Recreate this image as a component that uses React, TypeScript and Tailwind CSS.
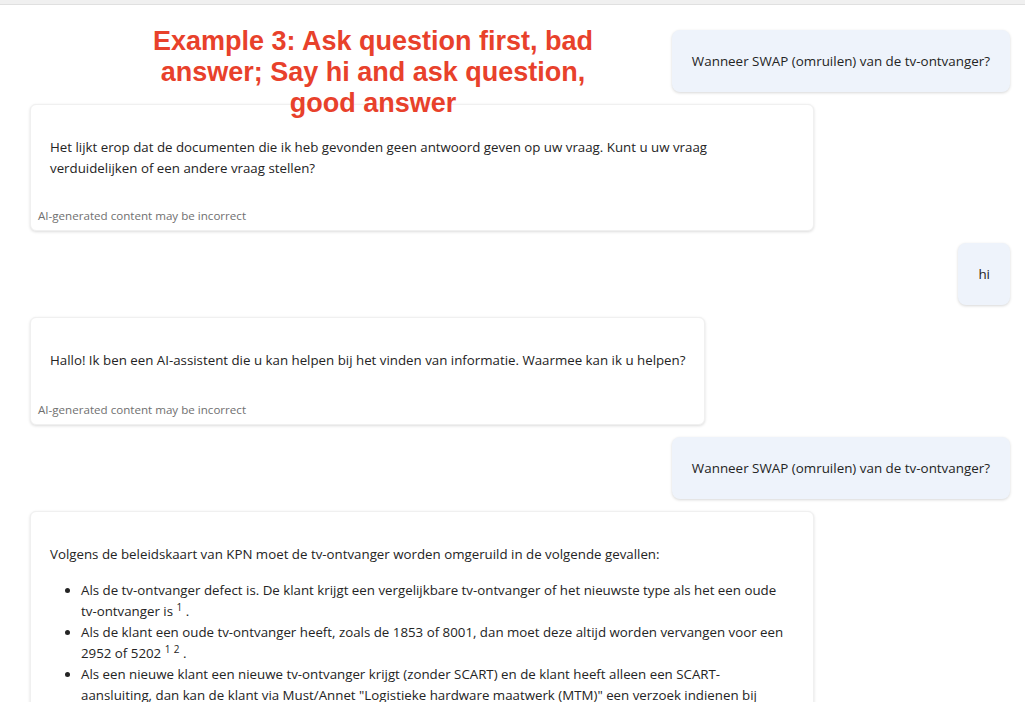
const font = { fontFamily: '"Open Sans", "Noto Sans", sans-serif' };

function UserBubble({ text }: { text: string }) {
  return (
    <div className="flex justify-end">
      <div className="rounded-lg bg-[#eef3fb] px-5 py-[21px] text-[13.4px] leading-5 text-[#242424] shadow-[0_1px_3px_rgba(0,0,0,0.16)]">
        {text}
      </div>
    </div>
  );
}

function BotCard({ children, roomy }: { children: React.ReactNode; roomy?: boolean }) {
  return (
    <div className="flex">
      <div className="max-w-[784px] rounded-md border border-[#f0f0f0] bg-white pb-[6px] pt-[32px] shadow-[0_1px_3px_rgba(0,0,0,0.14)]">
        <div className="px-[19px] text-[13.3px] leading-[21px] text-[#242424]">{children}</div>
        <p className={(roomy ? "mt-[31px]" : "mt-[29px]") + " px-[7px] text-[11.6px] leading-4 text-[#707070]"}>
          AI-generated content may be incorrect
        </p>
      </div>
    </div>
  );
}

export default function App() {
  return (
    <div className="relative min-h-[702px] overflow-hidden bg-white" style={font}>
      <div className="h-[5px] border-b border-[#e0e0e0] bg-[#f0f0f0]" />

      <div className="flex flex-col gap-3 pb-10 pl-[30px] pr-[15px] pt-[25px]">
        <UserBubble text="Wanneer SWAP (omruilen) van de tv-ontvanger?" />
        <BotCard>
          <p>
            Het lijkt erop dat de documenten die ik heb gevonden geen antwoord geven op uw vraag. Kunt u uw vraag
            verduidelijken of een andere vraag stellen?
          </p>
        </BotCard>
        <UserBubble text="hi" />
        <BotCard roomy>
          <p>Hallo! Ik ben een AI-assistent die u kan helpen bij het vinden van informatie. Waarmee kan ik u helpen?</p>
        </BotCard>
        <UserBubble text="Wanneer SWAP (omruilen) van de tv-ontvanger?" />
        <BotCard>
          <p>Volgens de beleidskaart van KPN moet de tv-ontvanger worden omgeruild in de volgende gevallen:</p>
          <ul className="mt-[15px] list-disc pl-[31px] pr-[7px]">
            <li>
              Als de tv-ontvanger defect is. De klant krijgt een vergelijkbare tv-ontvanger of het nieuwste type als het
              een oude tv-ontvanger is <sup>1</sup> .
            </li>
            <li>
              Als de klant een oude tv-ontvanger heeft, zoals de 1853 of 8001, dan moet deze altijd worden vervangen voor
              een 2952 of 5202 <sup>1</sup> <sup>2</sup> .
            </li>
            <li>
              Als een nieuwe klant een nieuwe tv-ontvanger krijgt (zonder SCART) en de klant heeft alleen een
              SCART-aansluiting, dan kan de klant via Must/Annet "Logistieke hardware maatwerk (MTM)" een verzoek
              indienen bij Logistiek voor een tv-ontvanger met SCART-aansluiting <sup>2</sup> .
            </li>
          </ul>
        </BotCard>
      </div>

      <h1
        className="absolute left-[133px] top-[26px] w-[480px] text-center text-[27px] font-bold leading-[31px] text-[#e8412b]"
        style={{ fontFamily: '"Liberation Sans", Arial, sans-serif' }}
      >
        Example 3: Ask question first, bad answer; Say hi and ask question, good answer
      </h1>
    </div>
  );
}
